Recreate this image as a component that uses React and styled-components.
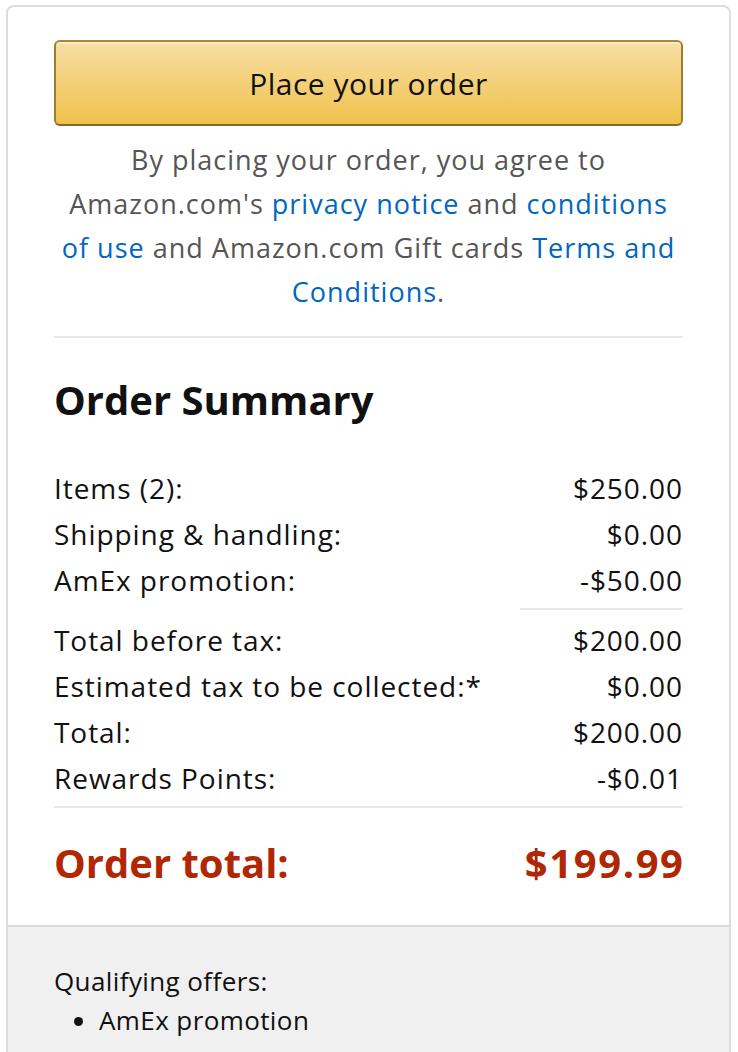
import React from "react";
import styled, { createGlobalStyle } from "styled-components";

const Global = createGlobalStyle`
  html, body { margin: 0; padding: 0; background: #fff; }
  body { font-family: "Open Sans", "Noto Sans", Arial, sans-serif; color: #111; }
  * { box-sizing: border-box; }
`;

const Card = styled.div`
  margin: 5px 0 0 6px;
  width: 725px;
  border: 2px solid #dddddd;
  border-radius: 8px;
  overflow: hidden;
  background: #fff;
`;

const Main = styled.div`
  padding: 33px 46px 38px;
  display: flex;
  flex-direction: column;
`;

const OrderButton = styled.button`
  height: 86px;
  width: 100%;
  border: 2px solid;
  border-color: #a88734 #9c7e31 #846a29;
  border-radius: 6px;
  background: linear-gradient(to bottom, #f7dfa5, #f0c14b);
  box-shadow: inset 0 2px 0 rgba(255, 255, 255, 0.4);
  font-family: inherit;
  font-size: 30px;
  letter-spacing: 0.5px;
  color: #111;
  cursor: pointer;
`;

const Legal = styled.p`
  margin: 12px 0 0;
  text-align: center;
  font-size: 27px;
  letter-spacing: 1px;
  line-height: 44px;
  color: #555;
`;

const Link = styled.a`
  color: #0066c0;
  text-decoration: none;
`;

const Divider = styled.hr`
  border: 0;
  border-top: 2px solid #e7e7e7;
  margin: ${(p) => p.$m || "0"};
  width: ${(p) => p.$w || "100%"};
  align-self: flex-end;
`;

const Heading = styled.h2`
  margin: 38px 0 41px;
  font-size: 40px;
  line-height: 48px;
  font-weight: 700;
`;

const Row = styled.div`
  display: flex;
  justify-content: space-between;
  font-size: 28px;
  letter-spacing: 0.95px;
  line-height: 46px;
`;

const TotalRow = styled.div`
  display: flex;
  justify-content: space-between;
  margin-top: 31px;
  font-size: 40px;
  line-height: 48px;
  font-weight: 700;
  color: #b12704;
`;

const TotalValue = styled.span`
  letter-spacing: 1.6px;
  margin-right: -1.6px;
`;

const Offers = styled.div`
  background: #f0f0f0;
  border-top: 2px solid #dddddd;
  padding: 35px 46px 30px;
  font-size: 26px;
  letter-spacing: 0.4px;
  line-height: 39px;
`;

const OfferList = styled.ul`
  margin: 0;
  padding-left: 45px;
`;

const rowsA = [
  ["Items (2):", "$250.00"],
  ["Shipping & handling:", "$0.00"],
  ["AmEx promotion:", "-$50.00"],
];
const rowsB = [
  ["Total before tax:", "$200.00"],
  ["Estimated tax to be collected:*", "$0.00"],
  ["Total:", "$200.00"],
  ["Rewards Points:", "-$0.01"],
];

export default function App() {
  return (
    <>
      <Global />
      <Card>
        <Main>
          <OrderButton>Place your order</OrderButton>
          <Legal>
            By placing your order, you agree to Amazon.com's{" "}
            <Link href="#">privacy notice</Link> and{" "}
            <Link href="#">conditions of use</Link> and Amazon.com Gift cards{" "}
            <Link href="#">Terms and Conditions</Link>.
          </Legal>
          <Divider $m="22px 0 0" />
          <Heading>Order Summary</Heading>
          {rowsA.map(([l, v]) => (
            <Row key={l}>
              <span>{l}</span>
              <span>{v}</span>
            </Row>
          ))}
          <Divider $w="163px" $m="5px 0 7px" />
          {rowsB.map(([l, v]) => (
            <Row key={l}>
              <span>{l}</span>
              <span>{v}</span>
            </Row>
          ))}
          <Divider $m="5px 0 0" />
          <TotalRow>
            <span>Order total:</span>
            <TotalValue>$199.99</TotalValue>
          </TotalRow>
        </Main>
        <Offers>
          Qualifying offers:
          <OfferList>
            <li>AmEx promotion</li>
          </OfferList>
        </Offers>
      </Card>
    </>
  );
}
